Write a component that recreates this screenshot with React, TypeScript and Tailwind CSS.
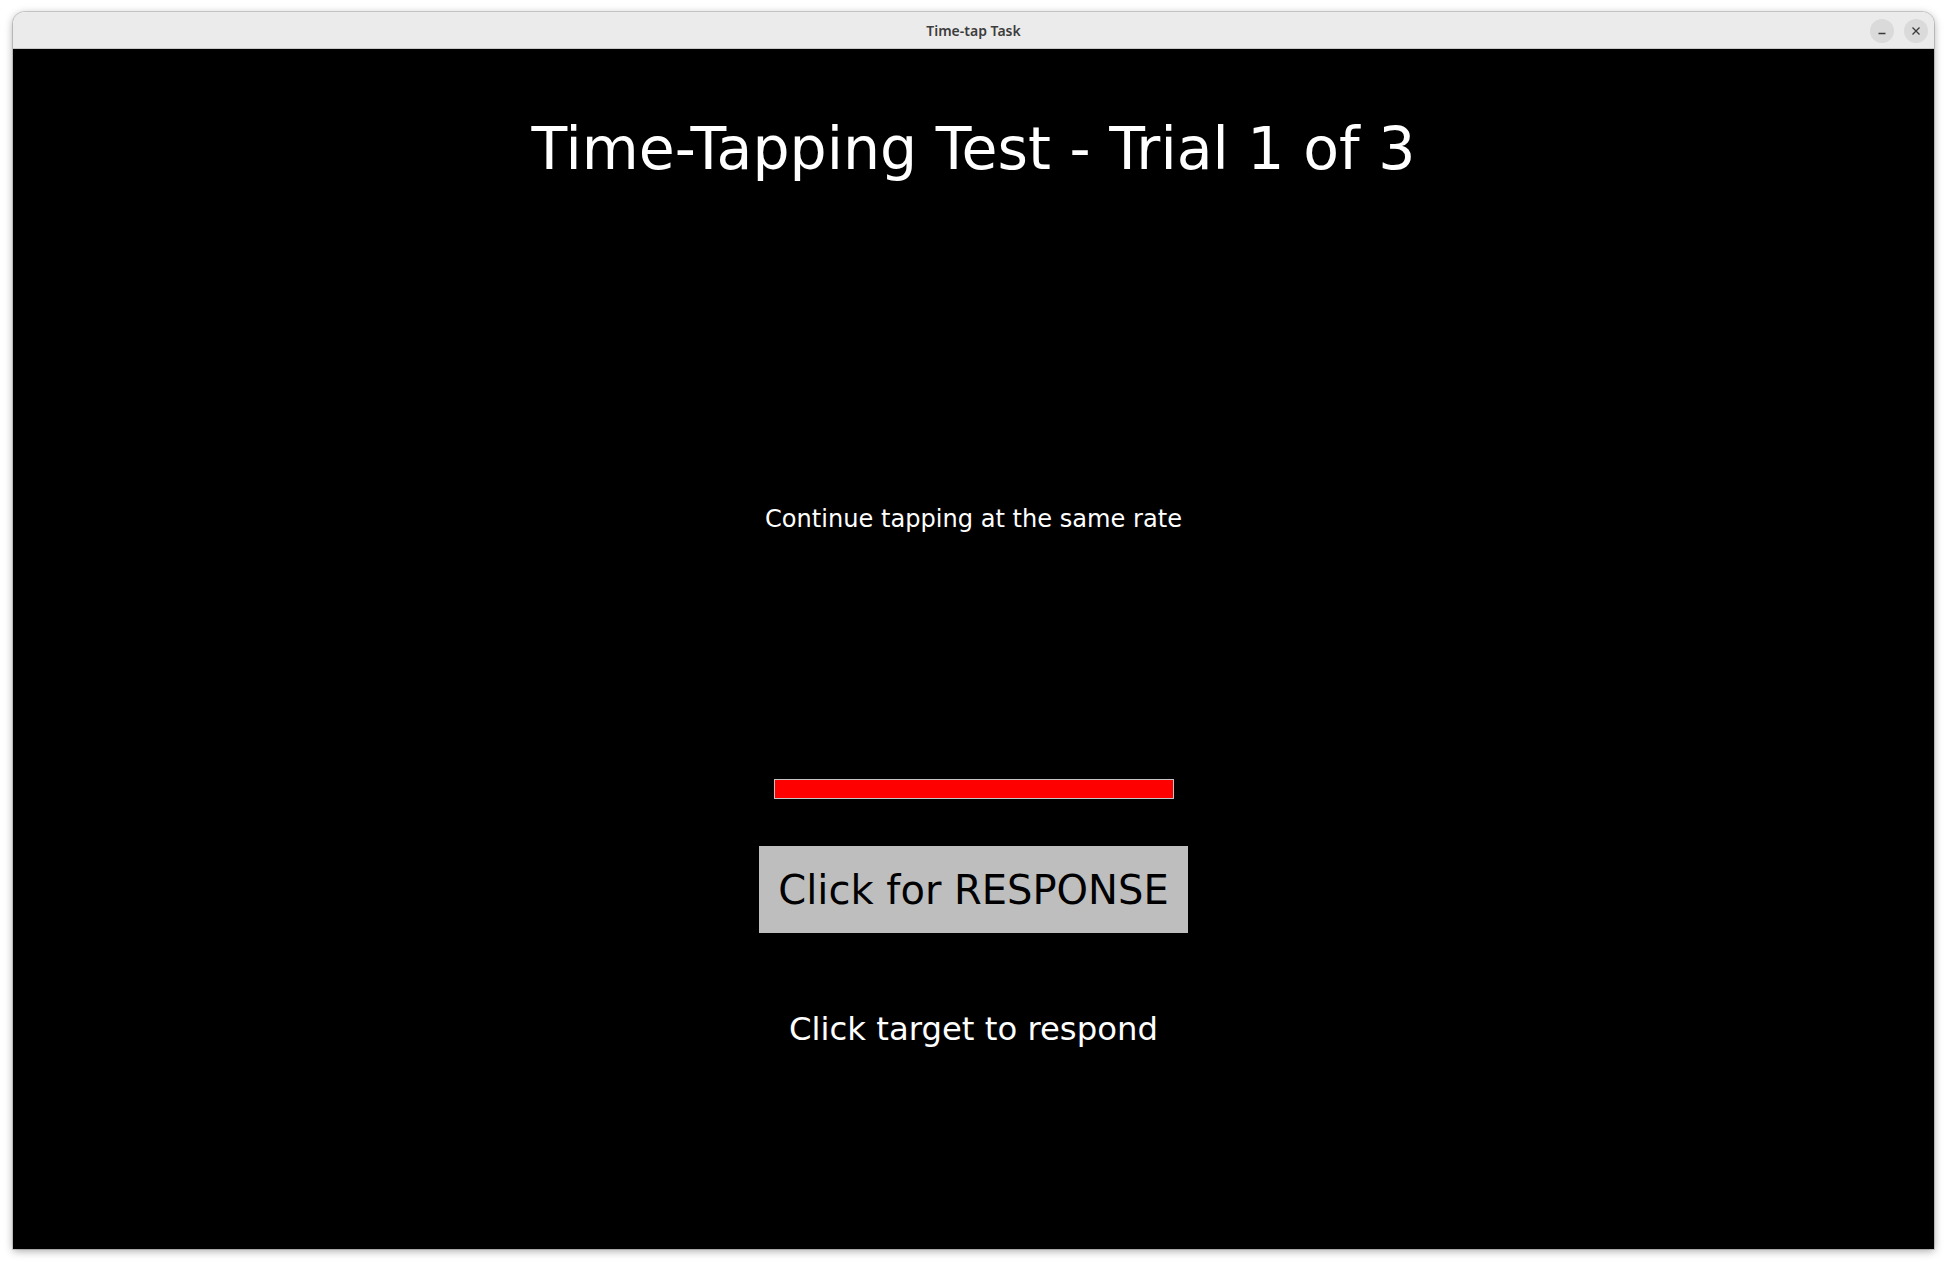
const dejavu = { fontFamily: '"DejaVu Sans", "Liberation Sans", sans-serif' };

function TitleBar() {
  return (
    <div className="relative flex h-[37px] items-center justify-center rounded-t-[12px] border-b border-[#c9c9c9] bg-[#ebebeb]">
      <span
        className="text-[14px] font-semibold text-[#3d3d3d]"
        style={{ fontFamily: '"Noto Sans", "DejaVu Sans", sans-serif' }}
      >
        Time-tap Task
      </span>
      <div className="absolute right-[6px] top-[7px] flex items-center gap-[10px]">
        <button className="flex h-[24px] w-[24px] items-center justify-center rounded-full bg-[#dadada]">
          <svg width="10" height="10" viewBox="0 0 10 10">
            <path d="M1.5 7.5h7" stroke="#3a3a3a" strokeWidth="1.3" />
          </svg>
        </button>
        <button className="flex h-[24px] w-[24px] items-center justify-center rounded-full bg-[#dadada]">
          <svg width="10" height="10" viewBox="0 0 10 10">
            <path d="M1.5 1.5l7 7M8.5 1.5l-7 7" stroke="#3a3a3a" strokeWidth="1.3" />
          </svg>
        </button>
      </div>
    </div>
  );
}

function TaskScreen() {
  return (
    <div className="flex h-[1200px] flex-col items-center bg-black pt-[71px] text-white" style={dejavu}>
      <h1 className="text-[58.5px] leading-[58px] font-normal">Time-Tapping Test - Trial 1 of 3</h1>
      <p className="mt-[329px] text-[24.1px] leading-[24px]">Continue tapping at the same rate</p>
      <div className="mt-[248px] h-[20px] w-[400px] border border-[#c4c4c4] bg-[#ff0000]" />
      <button className="mt-[47px] flex h-[87px] w-[429px] items-center justify-center bg-[#bebebe] text-[40px] text-black">
        Click for RESPONSE
      </button>
      <p className="mt-[80px] text-[32.3px] leading-[32px]">Click target to respond</p>
    </div>
  );
}

export default function App() {
  return (
    <div className="min-h-[1266px] w-[1948px] bg-white pl-[13px] pt-[12px]">
      <div className="w-[1921px] overflow-hidden rounded-t-[12px] shadow-[0_2px_8px_rgba(0,0,0,0.35)] ring-1 ring-black/15">
        <TitleBar />
        <TaskScreen />
      </div>
    </div>
  );
}
